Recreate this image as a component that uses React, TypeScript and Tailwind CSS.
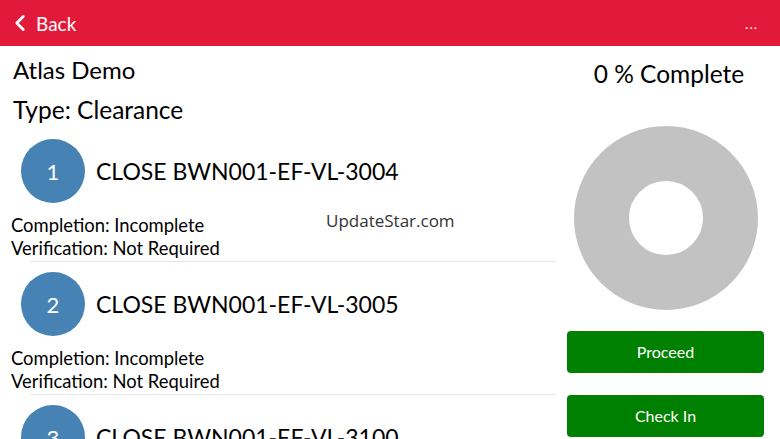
import { ChevronLeft } from 'lucide-react'

const tasks = [
  { n: 1, title: 'CLOSE BWN001-EF-VL-3004' },
  { n: 2, title: 'CLOSE BWN001-EF-VL-3005' },
  { n: 3, title: 'CLOSE BWN001-EF-VL-3100' },
]

const font = { fontFamily: 'Lato, "Noto Sans", sans-serif' }

export default function App() {
  return (
    <div className="relative w-[780px] h-[439px] overflow-hidden bg-white text-black" style={font}>
      <header className="h-[46px] bg-[#e3193a] flex items-center justify-between pl-[7px] pr-[22px] text-white">
        <div className="flex items-center gap-[3px]">
          <ChevronLeft size={26} strokeWidth={2.6} />
          <span className="text-[19px] leading-none">Back</span>
        </div>
        <span className="text-[14px] leading-none tracking-[1px] mt-[2px]">...</span>
      </header>

      <div className="flex">
        <div className="w-[556px] shrink-0">
          <div className="pl-[13px] pt-[10px]">
            <div className="h-[28px] flex items-center text-[24px] leading-none">Atlas Demo</div>
            <div className="h-[40px] mt-[6px] flex items-center text-[24.5px] leading-none">Type: Clearance</div>
          </div>
          <div className="mt-[9px]">
            {tasks.map((t) => (
              <div key={t.n} className="pb-[10px]">
                <div className="flex items-center pl-[21px] h-[64px]">
                  <div className="w-[64px] h-[64px] rounded-full bg-[#4682b4] text-white flex items-center justify-center text-[22px]">
                    {t.n}
                  </div>
                  <span className="ml-[11px] text-[23px] leading-none">{t.title}</span>
                </div>
                <div className="pl-[11px] pt-[11px] text-[18.4px] leading-[23px]">
                  <div>Completion: Incomplete</div>
                  <div>Verification: Not Required</div>
                </div>
                <div className="ml-[30px] border-b border-[#e6e6e6] mt-[1px]" />
              </div>
            ))}
          </div>
        </div>

        <div className="w-[219px] shrink-0 px-[11px] flex flex-col items-center">
          <div className="h-[28px] mt-[14px] ml-[7px] flex items-center text-[24.5px] leading-none">0 % Complete</div>
          <svg width="184" height="184" viewBox="0 0 184 184" className="mt-[38px]">
            <circle cx="92" cy="92" r="64.5" fill="none" stroke="#c2c2c2" strokeWidth="55" />
          </svg>
          <button className="mt-[21px] w-[197px] h-[42px] rounded-[4px] bg-[#008000] text-white text-[16px]">
            Proceed
          </button>
          <button className="mt-[22px] w-[197px] h-[42px] rounded-[4px] bg-[#008000] text-white text-[16px]">
            Check In
          </button>
        </div>
      </div>

      <div
        className="absolute left-[326px] top-[209px] text-[17px] leading-[24px] text-[#333]"
        style={{ fontFamily: '"Open Sans", "Noto Sans", sans-serif' }}
      >
        UpdateStar.com
      </div>
    </div>
  )
}
